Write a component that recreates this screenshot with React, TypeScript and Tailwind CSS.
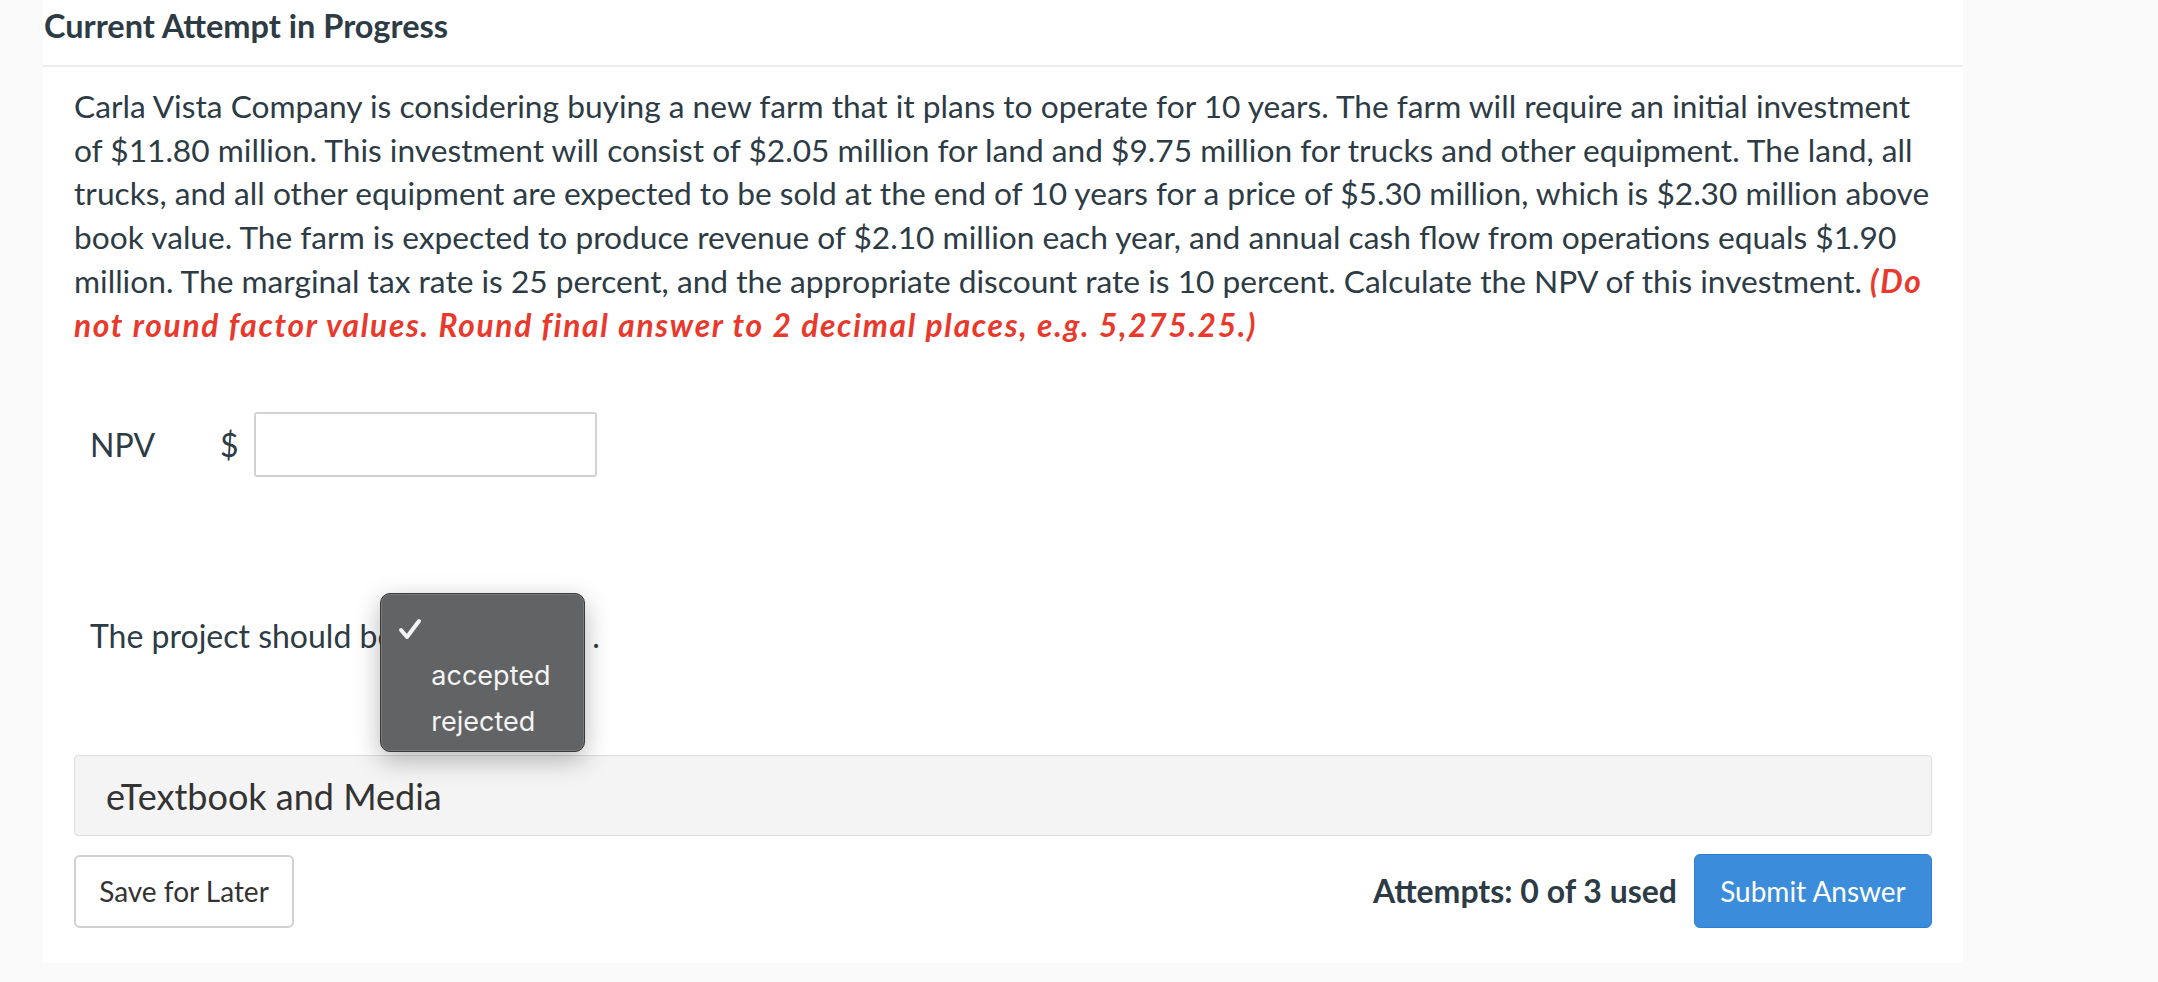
import React from 'react';

export default function App() {
  return (
    <div className="min-h-screen bg-[#fafafa] font-['Lato','Noto_Sans',sans-serif] text-[#2d3b45]">
      <div className="ml-[43px] w-[1920px] bg-white pb-[35px]">
        <div className="h-[67px] border-b-2 border-[#ececec] pl-[1px] pt-[7px]">
          <h2 className="text-[32.5px] font-bold leading-[38px]">Current Attempt in Progress</h2>
        </div>

        <div className="px-[31px]">
          <p className="mt-[18px] text-[31.7px] leading-[43.7px]">
            Carla Vista Company is considering buying a new farm that it plans to operate for 10 years. The farm will require an initial investment
            <br />
            of $11.80 million. This investment will consist of $2.05 million for land and $9.75 million for trucks and other equipment. The land, all
            <br />
            trucks, and all other equipment are expected to be sold at the end of 10 years for a price of $5.30 million, which is $2.30 million above
            <br />
            book value. The farm is expected to produce revenue of $2.10 million each year, and annual cash flow from operations equals $1.90
            <br />
            million. The marginal tax rate is 25 percent, and the appropriate discount rate is 10 percent. Calculate the NPV of this investment.{' '}
            <span className="font-bold italic tracking-[1.7px] text-[#e8392c]">
              (Do
              <br />
              not round factor values. Round final answer to 2 decimal places, e.g. 5,275.25.)
            </span>
          </p>

          <div className="mt-[65px] flex h-[65px] items-center pl-[16px] text-[32px]">
            <span className="w-[130px]">NPV</span>
            <span className="w-[34px]">$</span>
            <input
              type="text"
              className="h-[65px] w-[343px] rounded-[3px] border-2 border-[#d2d2d2] bg-white px-3 outline-none"
            />
          </div>

          <div className="mt-[134px] flex h-[50px] items-center pl-[16px] text-[32px]">
            <span>The project should be</span>
            <span className="relative ml-[8px] h-[46px] w-[190px]">
              <div className="absolute left-[-22px] top-[-20px] z-10 h-[159px] w-[205px] rounded-[10px] border border-[#3a3a3a] bg-[#626365] pt-[12px] font-['Inter','Liberation_Sans',sans-serif] text-[27px] text-[#f4f4f4] shadow-[inset_0_0_0_1px_rgba(255,255,255,0.14),0_8px_26px_rgba(0,0,0,0.28)]">
                <div className="flex h-[46px] items-center pl-[17px]">
                  <svg width="24" height="22" viewBox="0 0 24 22" fill="none">
                    <path d="M3 12 L9 19 L21 3" stroke="#f4f4f4" strokeWidth="4" strokeLinecap="round" strokeLinejoin="round" />
                  </svg>
                </div>
                <div className="flex h-[46px] items-center pl-[50px] leading-none">accepted</div>
                <div className="flex h-[46px] items-center pl-[50px] leading-none">rejected</div>
              </div>
            </span>
            <span>.</span>
          </div>

          <div className="mt-[94px] flex h-[81px] items-center rounded-[4px] border border-[#dcdcdc] bg-[#f4f4f4] pl-[31px] text-[36px] text-[#333]">
            eTextbook and Media
          </div>

          <div className="mt-[18px] flex items-center justify-between">
            <button className="h-[73px] w-[220px] rounded-[6px] border-2 border-[#d0d0d0] bg-white text-[28px] text-[#333]">
              Save for Later
            </button>
            <div className="flex items-center gap-[17px]">
              <span className="text-[32px] font-bold">Attempts: 0 of 3 used</span>
              <button className="h-[74px] w-[238px] rounded-[6px] border border-[#2f7fcf] bg-[#3b8ddb] text-[28px] text-white">
                Submit Answer
              </button>
            </div>
          </div>
        </div>
      </div>
    </div>
  );
}
